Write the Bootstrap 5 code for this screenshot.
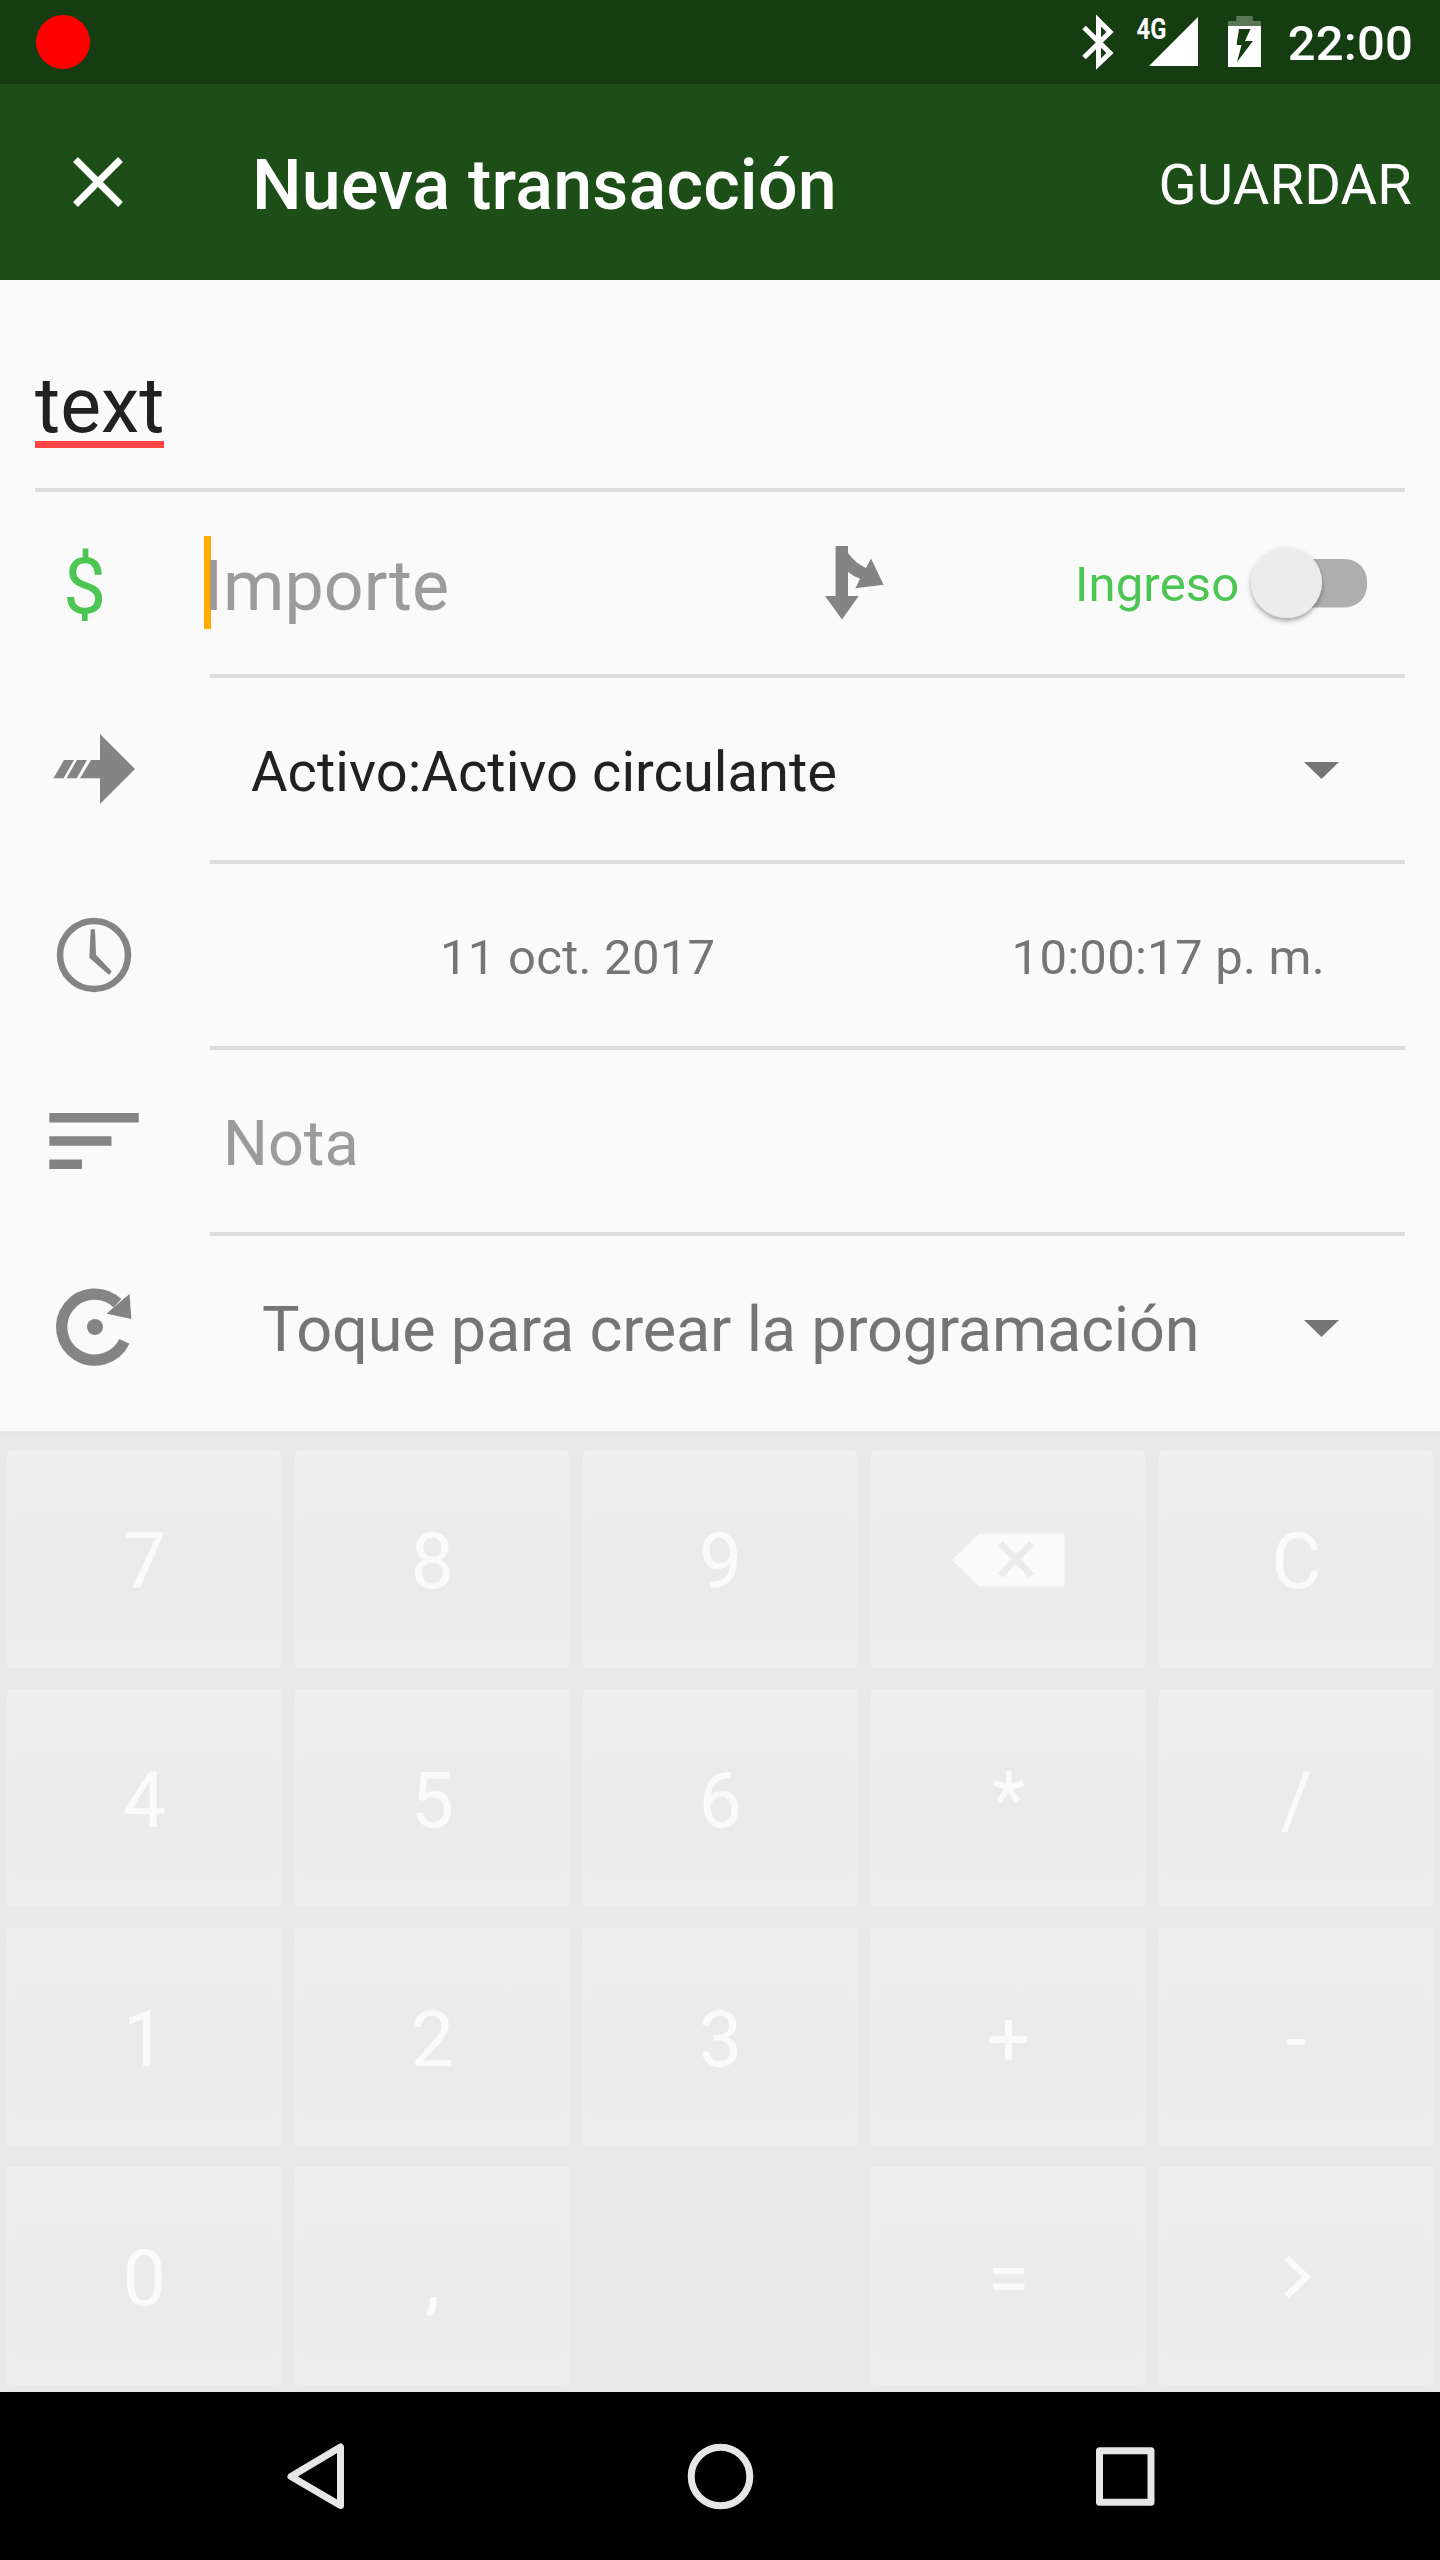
<!DOCTYPE html>
<html lang="es">
<head>
<meta charset="utf-8">
<meta name="viewport" content="width=device-width, initial-scale=1">
<title>Nueva transacción</title>
<link href="https://cdn.jsdelivr.net/npm/bootstrap@5.3.0/dist/css/bootstrap.min.css" rel="stylesheet">
<style>
  body { font-family: Roboto, "Noto Sans", sans-serif; background: #fafafa; color: #212121; line-height: 1.2; }
  svg { display: block; flex: none; }
  .screen { width: 1440px; height: 2560px; }
  .status-bar { height: 84px; background: #163d11; padding: 0 28px 0 36px; }
  .status-time { font-size: 49px; font-weight: 500; padding-top: 5px; letter-spacing: .2px; margin-right: -1px; }
  .rec-dot { width: 54px; height: 54px; background: #f00; }
  .app-bar { height: 196px; background: #1d4e17; padding: 0 28px 0 0; }
  .app-title { font-size: 70px; font-weight: 500; padding-top: 6px; margin-left: 42px; letter-spacing: .18px; }
  .save-btn { font-size: 56px; padding: 7px 0 0; line-height: 1.2; letter-spacing: .2px; }
  .name-row { height: 212px; margin: 0 35px; padding-top: 44px; border-bottom: 4px solid #dcdcdc; }
  .name-field { font-size: 77px; position: relative; line-height: 92px; }
  .name-field::after { content: ""; position: absolute; left: 0; right: 0; top: 81px; height: 7px; background: #ff4444; }
  .field-row { height: 186px; }
  .field-icon { width: 210px; height: 182px; }
  .field-body { width: 1195px; border-bottom: 4px solid #dcdcdc; }
  .last-row { height: 195px; padding-bottom: 9px; }
  .last-row .field-body { border-color: transparent; }
  .hint { color: #9b9b9b; }
  .amount { font-size: 70px; padding-top: 6px; position: relative; isolation: isolate; margin-left: -6px; width: 621px; }
  .amount .caret-bar { position: absolute; left: 0; top: -2px; width: 7px; height: 93px; background: #ffab00; z-index: -1; }
  .money { color: #4bc653; }
  .currency { width: 210px; height: 182px; font-size: 77px; padding: 9px 0 0 63px; }
  .kind { font-size: 49px; padding-top: 4px; margin-left: 190px; letter-spacing: .15px; }
  .account { font-size: 56px; padding: 8px 0 0 41px; letter-spacing: .05px; }
  .when { font-size: 49px; color: #757575; padding-top: 6px; letter-spacing: .27px; }
  .when-date { margin-left: 230px; }
  .when-time { margin-right: 80px; }
  .note { font-size: 63px; padding: 5px 0 0 13px; }
  .recur { font-size: 63px; color: #757575; padding: 5px 0 0 52px; letter-spacing: -.2px; }
  .drop { margin-right: 66px; margin-top: 2px; }
  .keypad { height: 961px; background: linear-gradient(#e6e6e6, #e9e9e9 5px); padding: 19px 8px 7px 7px; row-gap: 21px; column-gap: 14px; display: grid; grid-template-columns: repeat(5, 274px); grid-template-rows: repeat(4, 218px); }
  .key { --bs-btn-border-width: 0; --bs-btn-border-radius: 5px; --bs-btn-color: #fafafa; font-size: 77px; line-height: 92px; padding: 5px 0 0 1px; background: linear-gradient(#efefef, #eeeeee 8%, #ececec 28%, #ebebeb 40%, #ebebeb 82%, #eeeeee); box-shadow: inset 0 0 8px #efefef; }
  .key svg { margin-top: -3px; }
  .nav-keys { height: 168px; background: #000; }
</style>
</head>
<body>
<div class="screen d-flex flex-column overflow-hidden">
  <header class="status-bar d-flex align-items-center justify-content-between text-white">
    <span class="rec-dot rounded-circle"></span>
    <div class="d-flex align-items-center">
      <svg width="209" height="84" viewBox="1080 0 209 84">
        <path d="M1085 27.500L1111 53L1099.500 64V20.500L1111 32L1085 57.500" fill="none" stroke="#fff" stroke-width="5"/>
        <text x="1137.500" y="39" font-family="Roboto" font-weight="700" font-size="29.500" fill="#fff" textLength="30" lengthAdjust="spacingAndGlyphs">4G</text>
        <path d="M1150 66L1199 17V66Z" fill="#fff"/>
        <path d="M1237.300 16H1253.700V21H1262V26H1229V21H1237.300Z" fill="#fff" opacity=".3"/>
        <path fill-rule="evenodd" d="M1229 26H1262V67H1229ZM1240 29L1237.500 45H1242.500L1238 62L1254 41H1246L1251.500 29Z" fill="#fff"/>
      </svg>
      <span class="status-time">22:00</span>
    </div>
  </header>
  <nav class="app-bar d-flex align-items-center text-white">
    <svg width="210" height="196" viewBox="0 84 210 196"><path d="M75.500 159.500L120.500 204.500M120.500 159.500L75.500 204.500" stroke="#fff" stroke-width="6.800"/></svg>
    <span class="app-title">Nueva transacción</span>
    <button class="save-btn btn border-0 text-white ms-auto">GUARDAR</button>
  </nav>
  <main>
    <div class="name-row d-flex align-items-center"><span class="name-field">text</span></div>

    <div class="field-row d-flex">
      <span class="currency money d-flex align-items-center">$</span>
      <div class="field-body d-flex align-items-center">
        <span class="amount hint"><i class="caret-bar"></i>Importe</span>
        <svg width="60" height="182" viewBox="825 492 60 182"><path fill="#848484" d="M835.600 546H848V553Q855 563 866 568L871 558.600L883.600 584.700L855.400 588.300L860 578.700Q853 576 848 572V596H858.700L842 619.500L825 596H835.600Z"/></svg>
        <span class="kind money">Ingreso</span>
        <svg class="ms-auto" width="165" height="182" viewBox="1240 492 165 182">
          <defs><filter id="thumbShadow" x="-20%" y="-20%" width="140%" height="150%"><feDropShadow dx="0" dy="3" stdDeviation="2.500" flood-opacity=".35"/></filter></defs>
          <rect x="1270" y="559" width="97" height="48.500" rx="22" fill="#afafaf"/>
          <circle cx="1286.500" cy="582.500" r="35.500" fill="#ececec" filter="url(#thumbShadow)"/>
        </svg>
      </div>
    </div>

    <div class="field-row d-flex">
      <svg class="field-icon" viewBox="0 678 210 182"><path fill="#848484" d="M64 760H74L63.500 778.300H53.500ZM77 760H87L76.700 778.300H66.500ZM91 760H100V734L135 769L100 804V778.300H80Z"/></svg>
      <div class="field-body d-flex align-items-center justify-content-between">
        <span class="account">Activo:Activo circulante</span>
        <svg class="drop" width="35" height="18" viewBox="0 0 35 18"><path fill="#757575" d="M0 1H35L17.500 18Z"/></svg>
      </div>
    </div>

    <div class="field-row d-flex">
      <svg class="field-icon" viewBox="0 864 210 182"><circle cx="94" cy="955" r="34" fill="none" stroke="#848484" stroke-width="6.500"/><path fill="#848484" d="M90.700 929.300H95L96 954.700L111.700 971.300L109 975L89.300 957.700Z"/></svg>
      <div class="field-body d-flex align-items-center">
        <span class="when when-date">11 oct. 2017</span>
        <span class="when when-time ms-auto">10:00:17 p. m.</span>
      </div>
    </div>

    <div class="field-row d-flex">
      <svg class="field-icon" viewBox="0 1050 210 182"><path fill="#848484" d="M49.300 1113H138.700V1122.500H49.300ZM49.300 1136.300H111.500V1145.800H49.300ZM49.300 1159.500H82V1169H49.300Z"/></svg>
      <div class="field-body d-flex align-items-center"><span class="note hint">Nota</span></div>
    </div>

    <div class="field-row last-row d-flex">
      <svg class="field-icon" viewBox="0 1236 210 182"><path d="M124.400 1341.400A33 33 0 1 1 117.500 1303.200" fill="none" stroke="#848484" stroke-width="11.300"/><path fill="#848484" d="M129.700 1294L131.300 1319L106.700 1313.700L113.500 1307.500L122.300 1300Z"/><circle cx="95" cy="1327" r="8" fill="#848484"/></svg>
      <div class="field-body d-flex align-items-center justify-content-between">
        <span class="recur">Toque para crear la programación</span>
        <svg class="drop" width="35" height="18" viewBox="0 0 35 18"><path fill="#757575" d="M0 1H35L17.500 18Z"/></svg>
      </div>
    </div>
  </main>

  <section class="keypad">
    <button class="btn key">7</button><button class="btn key">8</button><button class="btn key">9</button>
    <button class="btn key d-flex align-items-center justify-content-center"><svg width="113" height="54" viewBox="951.500 1533.500 113 54"><path fill="#fafafa" d="M951.700 1560.500L978.500 1534H1064V1587H978.500Z"/><path d="M1000 1544L1031 1576M1031 1544L1000 1576" stroke="#ebebeb" stroke-width="6.500"/></svg></button>
    <button class="btn key">C</button>
    <button class="btn key">4</button><button class="btn key">5</button><button class="btn key">6</button><button class="btn key">*</button><button class="btn key">/</button>
    <button class="btn key">1</button><button class="btn key">2</button><button class="btn key">3</button><button class="btn key">+</button><button class="btn key">-</button>
    <button class="btn key">0</button><button class="btn key">,</button><span></span><button class="btn key">=</button>
    <button class="btn key d-flex align-items-center justify-content-center"><svg width="28" height="44" viewBox="1283 2254 28 44"><path d="M1286.500 2257L1306.500 2276L1286.500 2295" fill="none" stroke="#fafafa" stroke-width="6.500"/></svg></button>
  </section>

  <footer class="nav-keys">
    <svg width="1440" height="168" viewBox="0 2392 1440 168" fill="none" stroke="#e6e6e6" stroke-width="7" stroke-linejoin="round">
      <path d="M340.500 2447V2505.500L291 2476.500Z"/>
      <circle cx="720.500" cy="2476.500" r="29.300"/>
      <rect x="1099.500" y="2450.800" width="51.500" height="51.500"/>
    </svg>
  </footer>
</div>
<script src="https://cdn.jsdelivr.net/npm/bootstrap@5.3.0/dist/js/bootstrap.bundle.min.js"></script>
</body>
</html>
